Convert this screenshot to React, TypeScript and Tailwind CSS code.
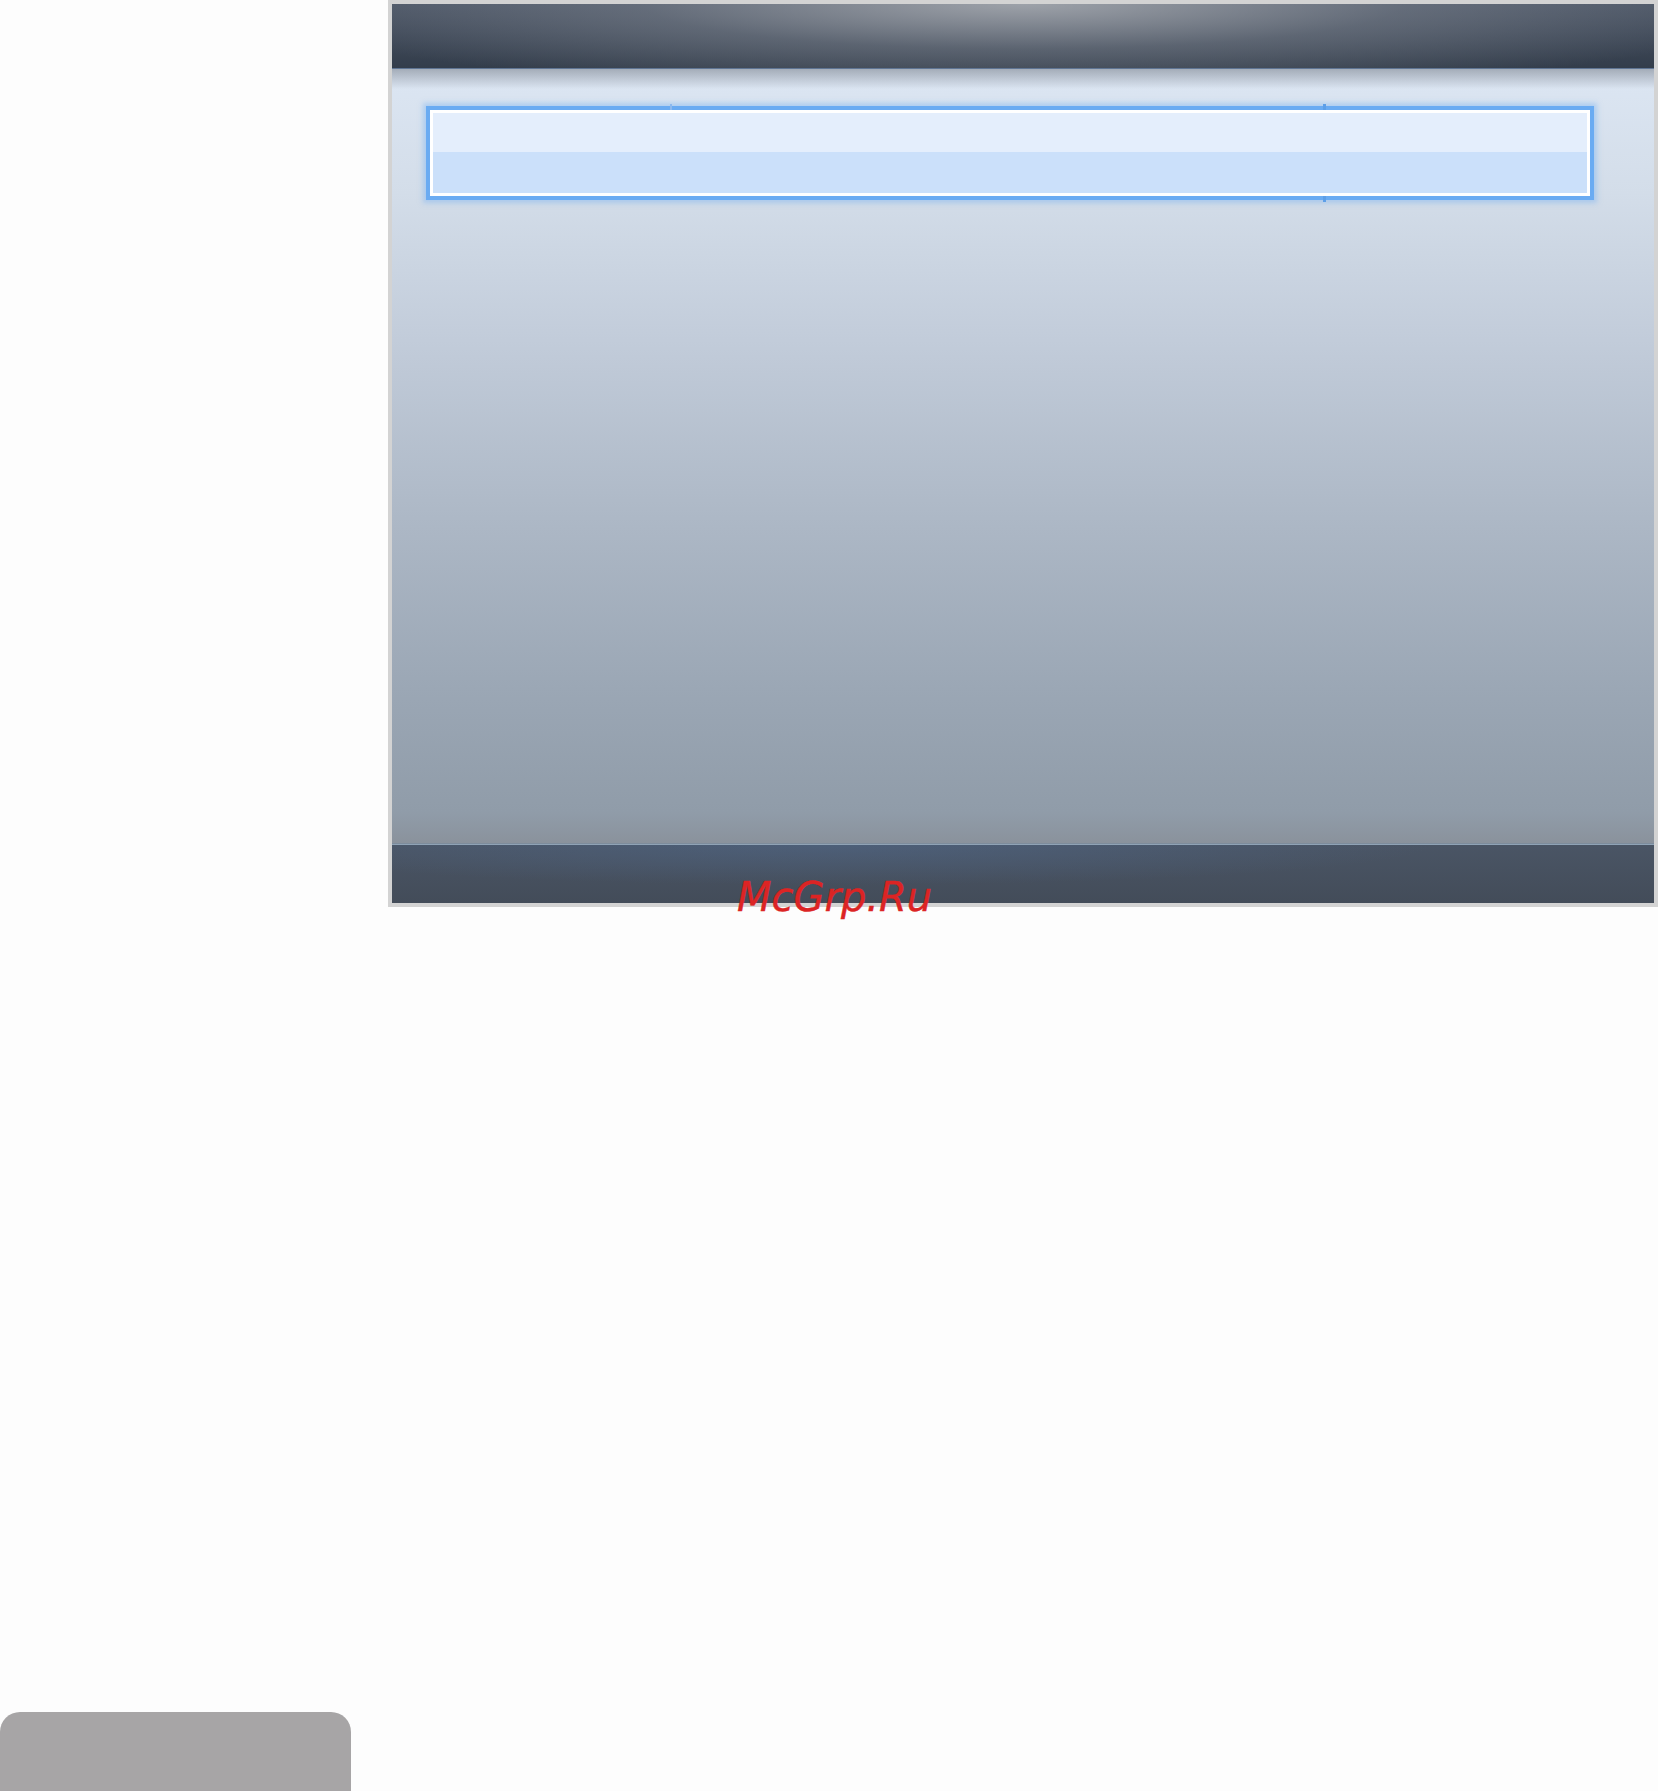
export default function App() {
  return (
    <div className="relative flex min-h-[1791px] w-[1658px] flex-col bg-[#fdfdfd]">
      {/* Menu window */}
      <div className="ml-[388px] flex h-[907px] w-[1270px] flex-col border-4 border-[#d3d3d3]">
        {/* Title bar */}
        <div className="h-[64px] shrink-0 bg-[radial-gradient(ellipse_760px_90px_at_50%_0%,rgba(178,181,186,0.8),rgba(140,146,156,0.4)_50%,transparent_100%),linear-gradient(to_bottom,#4b5565,#333d4b)]" />
        <div className="h-px shrink-0 bg-[#5f7594]" />

        {/* List area */}
        <div className="relative flex-1 bg-[linear-gradient(to_bottom,#dce6f3_0%,#d3dde9_16%,#c2ccda_35%,#adb8c6_58%,#9ba7b5_80%,#909ca9_96%,#8a929c_100%)] pl-[34px] pr-[60px] pt-[37px]">
          {/* shade under the title bar */}
          <div className="pointer-events-none absolute inset-x-0 top-0 h-[20px] bg-[linear-gradient(to_bottom,rgba(140,148,160,0.7),rgba(220,230,243,0))]" />

          {/* Selected row */}
          <div className="relative h-[94px] border-[4px] border-[#6aabf2] shadow-[0_0_5px_3px_rgba(130,182,242,0.5)]">
            <div className="flex h-full flex-col border-[3px] border-white">
              <div className="h-[39px] bg-[#e4eefc]" />
              <div className="flex-1 bg-[#cbe0fa]" />
            </div>
            <div className="absolute -top-[6px] left-[240px] h-[6px] w-[2px] bg-[#8db9ee]" />
            <div className="absolute -top-[6px] left-[893px] h-[6px] w-[3px] bg-[#5d9fe8]" />
            <div className="absolute -bottom-[6px] left-[893px] h-[6px] w-[3px] bg-[#5d9fe8]" />
          </div>
        </div>

        {/* Bottom bar */}
        <div className="h-px shrink-0 bg-[#7d8c9c]" />
        <div className="h-[1px] shrink-0 bg-[#90a3b6]" />
        <div className="flex-none h-[58px] bg-[radial-gradient(ellipse_600px_40px_at_35%_0%,rgba(80,105,140,0.5),transparent_100%),linear-gradient(to_bottom,#4a5565,#434c59)]" />
      </div>

      <span className="absolute left-[737px] top-[877px] text-[40px] leading-[40px] italic text-[#dc2424] [font-family:'DejaVu_Sans',sans-serif] [-webkit-text-stroke:0.4px_#dc2424]">
        McGrp.Ru
      </span>

      {/* Page tab */}
      <div className="mt-auto h-[79px] w-[351px] rounded-t-[20px] bg-[#a7a5a6]" />
    </div>
  )
}
